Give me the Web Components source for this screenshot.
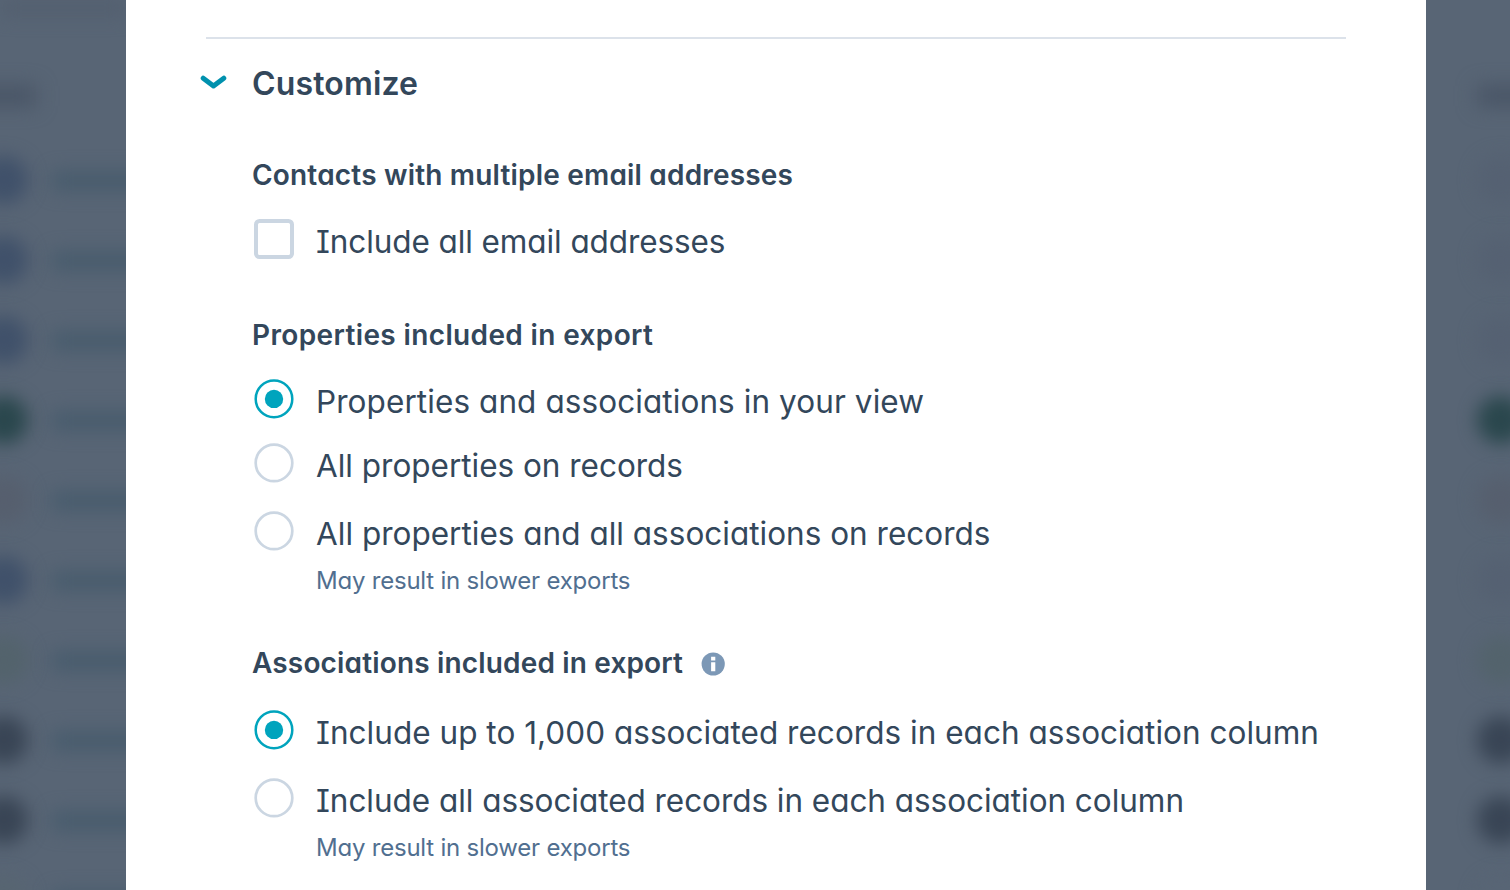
<!DOCTYPE html>
<html lang="en">
<head>
<meta charset="utf-8">
<title>Export view</title>
<style>
html,body{margin:0;height:100%;overflow:hidden;background:#586575}
body{font-family:Inter,"Open Sans",sans-serif;color:#33475b}
</style>
</head>
<body>
<export-page></export-page>
<script>
const define = (name, html, setup) => customElements.define(name, class extends HTMLElement {
  constructor() {
    super();
    const t = document.createElement('template');
    t.innerHTML = html;
    this.attachShadow({ mode: 'open' }).appendChild(t.content.cloneNode(true));
  }
  connectedCallback() { if (setup) setup(this, this.shadowRoot); }
});

// A line of text whose tracking is set so that it takes the given width.
define('tracked-text', `<style>
:host{display:block;white-space:nowrap;font-feature-settings:"cv11","cv08"}
span{display:inline-block}
</style><span><slot></slot></span>`, (el, root) => {
  const span = root.querySelector('span');
  const want = parseFloat(el.getAttribute('width'));
  requestAnimationFrame(() => {
    span.style.letterSpacing = '0';
    const count = el.textContent.length;
    const have = span.getBoundingClientRect().width;
    span.style.letterSpacing = ((want - have) / (count - 1)) + 'px';
  });
});

define('section-divider', `<style>:host{display:block;height:2px;background:#dce2ea}</style>`);

define('accordion-title', `<style>
:host{display:flex;align-items:center;height:40px;font-size:32px;line-height:40px;font-weight:600}
svg{width:28px;height:18px;margin:0 25px 4px -7px;flex:none}
</style><svg viewBox="0 0 28 18"><path d="M4.2 5.2 14.5 13 24.8 5.2" fill="none" stroke="#0091ae" stroke-width="5" stroke-linecap="round" stroke-linejoin="round"/></svg><slot></slot>`);

define('group-title', `<style>
:host{display:flex;align-items:center;height:40px;font-size:28px;line-height:40px;font-weight:600}
</style><slot></slot><slot name="icon"></slot>`);

define('info-icon', `<style>:host{display:block;width:24px;height:24px;margin:2px 0 0 18px}svg{display:block}</style>
<svg width="24" height="24" viewBox="0 0 24 24"><circle cx="12.2" cy="12" r="11.6" fill="#7c98b6"/><path d="M10.1 4.7h4.2v3.8h-4.2zM10.1 10.3h4.2v9h-4.2z" fill="#fff"/></svg>`);

define('choice-row', `<style>
:host{display:flex;gap:22px;height:40px;margin-left:2px}
svg{display:block;flex:none}
.label{padding-top:2.5px;font-size:31.5px;line-height:40px}
</style><svg width="40" height="40" viewBox="0 0 40 40"></svg><div class="label"><slot></slot></div>`, (el, root) => {
  const svg = root.querySelector('svg');
  const kind = el.getAttribute('kind');
  svg.innerHTML = kind === 'check'
    ? '<rect x="2" y="2" width="36" height="36" rx="3.5" fill="#fff" stroke="#cbd6e2" stroke-width="4"/>'
    : kind === 'on'
      ? '<circle cx="20" cy="19.9" r="18.3" fill="#fff" stroke="#00a4bd" stroke-width="2.5"/><circle cx="20" cy="19.9" r="9.2" fill="#00a4bd"/>'
      : '<circle cx="20" cy="19.9" r="18.3" fill="#fff" stroke="#cbd6e2" stroke-width="2.7"/>';
});

define('help-text', `<style>:host{display:block;margin-left:64px;height:30px;font-size:24px;line-height:30px;color:#516f90}</style><slot></slot>`);

// Out-of-focus contact list behind the dialog.
define('dimmed-list', `<style>
:host{display:block;height:890px;overflow:hidden;background:#586575}
.head{height:140px;display:flex;flex-direction:column}
.top{height:16px;background:#535f6f;filter:blur(9px);margin-bottom:70px}
.title{height:20px;width:60px;background:#485465;filter:blur(10px);margin-left:var(--title,-24px)}
.row{height:80px;display:flex;align-items:center;gap:24px;margin-left:var(--shift,-20px)}
i{width:48px;height:48px;border-radius:50%;flex:none;filter:blur(9px)}
b{width:120px;height:20px;flex:none;background:#485c6d;filter:blur(9px);margin-top:2px}
</style><div class="head"><div class="top"></div><div class="title"></div></div><div class="rows"></div>`, (el, root) => {
  const names = el.hasAttribute('names');
  if (!names) root.querySelector('.top').style.background = 'none';
  root.querySelector('.rows').innerHTML = el.getAttribute('colors').split(' ')
    .map(c => `<div class="row"><i style="background:${c}"></i>${names ? '<b></b>' : ''}</div>`).join('');
});

define('export-dialog', `<style>
:host{display:block;background:#fff;height:890px;box-sizing:border-box;padding:37px 80px 0;overflow:hidden}
</style><slot></slot>`);

define('option-group', `<style>:host{display:block;margin-left:46px}</style><slot></slot>`);

define('export-page', `<style>
:host{display:grid;grid-template-columns:126px 1300px 84px;height:890px;width:1510px;overflow:hidden}
.right{--shift:51px;--title:51px}
accordion-title{margin-top:25px}
.g1{margin-top:51px}.g2{margin-top:56px}.g3{margin-top:47px}
group-title + choice-row{margin-top:24px}
.g3 group-title + choice-row{margin-top:27px}
.next{margin-top:24px}.far{margin-top:28px}
help-text{margin-top:15px}
</style>
<dimmed-list names colors="#40516a #40516a #40516a #2a474d #565f6e #40516a #53636c #394555 #394555 #576571"></dimmed-list>
<export-dialog>
  <section-divider></section-divider>
  <accordion-title><tracked-text width="166">Customize</tracked-text></accordion-title>
  <option-group class="g1">
    <group-title><tracked-text width="541">Contacts with multiple email addresses</tracked-text></group-title>
    <choice-row kind="check"><tracked-text width="409.5">Include all email addresses</tracked-text></choice-row>
  </option-group>
  <option-group class="g2">
    <group-title><tracked-text width="401">Properties included in export</tracked-text></group-title>
    <choice-row kind="on"><tracked-text width="608">Properties and associations in your view</tracked-text></choice-row>
    <choice-row kind="off" class="next"><tracked-text width="367">All properties on records</tracked-text></choice-row>
    <choice-row kind="off" class="far"><tracked-text width="674.5">All properties and all associations on records</tracked-text></choice-row>
    <help-text><tracked-text width="314.5">May result in slower exports</tracked-text></help-text>
  </option-group>
  <option-group class="g3">
    <group-title><tracked-text width="431">Associations included in export</tracked-text><info-icon slot="icon"></info-icon></group-title>
    <choice-row kind="on"><tracked-text width="1003">Include up to 1,000 associated records in each association column</tracked-text></choice-row>
    <choice-row kind="off" class="far"><tracked-text width="868">Include all associated records in each association column</tracked-text></choice-row>
    <help-text><tracked-text width="314.5">May result in slower exports</tracked-text></help-text>
  </option-group>
</export-dialog>
<dimmed-list class="right" colors="#556172 #556172 #556172 #2a474d #565f6e #556172 #53636c #394555 #394555 #586575"></dimmed-list>`);
</script>
</body>
</html>
